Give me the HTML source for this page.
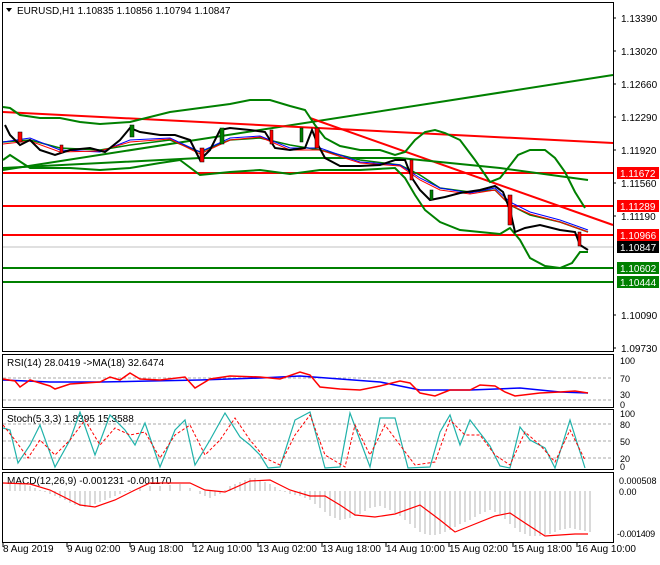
<!DOCTYPE html>
<html><head><meta charset="utf-8"><style>
body{margin:0;background:#fff;width:660px;height:560px;overflow:hidden;font-family:"Liberation Sans",sans-serif;}
svg text{font-family:"Liberation Sans",sans-serif;font-size:10px;fill:#000;}
</style></head><body>
<svg width="660" height="560" viewBox="0 0 660 560" xmlns="http://www.w3.org/2000/svg">
<rect width="660" height="560" fill="#fff"/>
<rect x="2.5" y="2.5" width="611" height="349" fill="none" stroke="#000"/>
<polygon points="6,8 12,8 9,12" fill="#000"/>
<text x="17" y="14">EURUSD,H1  1.10835 1.10856 1.10794 1.10847</text>
<g>
<text x="621" y="22">1.13390</text><text x="621" y="55">1.13020</text><text x="621" y="88">1.12660</text>
<text x="621" y="121">1.12290</text><text x="621" y="154">1.11920</text><text x="621" y="187">1.11560</text>
<text x="621" y="220">1.11190</text><text x="621" y="319">1.10090</text><text x="621" y="352">1.09730</text>
</g>
<g stroke="#000"><line x1="613" y1="18" x2="616" y2="18"/><line x1="613" y1="51" x2="616" y2="51"/><line x1="613" y1="84" x2="616" y2="84"/><line x1="613" y1="117" x2="616" y2="117"/><line x1="613" y1="150" x2="616" y2="150"/><line x1="613" y1="183" x2="616" y2="183"/><line x1="613" y1="216" x2="616" y2="216"/><line x1="613" y1="315" x2="616" y2="315"/><line x1="613" y1="348" x2="616" y2="348"/></g>
<line x1="3" y1="247" x2="613" y2="247" stroke="#c0c0c0"/>
<line x1="3" y1="173" x2="613" y2="173" stroke="#f00" stroke-width="2"/>
<line x1="3" y1="206" x2="613" y2="206" stroke="#f00" stroke-width="2"/>
<line x1="3" y1="235" x2="613" y2="235" stroke="#f00" stroke-width="2"/>
<line x1="3" y1="268" x2="613" y2="268" stroke="#008000" stroke-width="2"/>
<line x1="3" y1="282" x2="613" y2="282" stroke="#008000" stroke-width="2"/>
<line x1="3" y1="170" x2="613" y2="75" stroke="#008000" stroke-width="2"/>
<line x1="3" y1="112" x2="613" y2="143" stroke="#f00" stroke-width="2"/>
<line x1="310" y1="118" x2="613" y2="225" stroke="#f00" stroke-width="2"/>
<polyline points="3,168 200,158 400,158 500,168 588,180" fill="none" stroke="#008000" stroke-width="2"/>
<polyline points="3,107 10,108 20,115 40,118 60,118 80,122 100,124 130,122 170,112 200,108 230,104 250,100 270,100 290,106 305,110 315,125 325,138 340,146 360,150 380,150 395,155 405,152 415,140 425,132 435,130 445,133 460,140 475,160 490,182 500,178 508,168 518,155 530,150 545,150 555,158 565,172 575,192 585,208" fill="none" stroke="#008000" stroke-width="2"/>
<polyline points="3,160 10,155 30,168 50,168 70,168 100,170 130,168 160,163 180,160 200,175 230,172 260,170 290,174 320,170 360,170 395,168 405,178 415,195 425,210 440,222 460,230 480,232 500,234 510,228 520,240 530,258 545,266 560,268 572,263 580,252 588,252" fill="none" stroke="#008000" stroke-width="2"/>
<polyline points="3,142 30,140 60,148 100,150 130,145 170,140 200,152 230,140 260,138 290,145 320,150 360,160 400,165 420,175 440,188 470,192 495,190 510,205 530,215 560,222 588,232" fill="none" stroke="#008000" stroke-width="1.5"/>
<polyline points="3,142 30,138 60,150 100,152 130,140 170,138 200,152 230,138 260,136 290,148 320,148 360,162 400,165 420,178 440,188 470,193 495,188 510,202 530,212 560,220 588,230" fill="none" stroke="#00f" stroke-width="1"/>
<polyline points="3,144 30,141 60,152 100,151 130,142 170,139 200,154 230,140 260,137 290,150 320,150 360,163 400,166 420,180 440,190 470,194 495,190 510,205 530,214 560,222 588,232" fill="none" stroke="#f00" stroke-width="1"/>
<polyline points="5,125 10,135 20,145 30,140 40,150 55,155 70,150 90,148 105,152 120,140 130,128 140,132 160,135 175,135 190,140 200,160 210,150 220,130 230,128 250,130 265,132 275,148 290,150 305,148 312,130 318,145 325,158 340,166 360,166 380,165 395,160 405,160 412,178 420,190 430,200 445,197 460,193 480,190 495,186 503,192 510,210 515,232 525,228 540,225 560,230 575,232 580,245 588,250" fill="none" stroke="#000" stroke-width="2"/>
<g fill="#f00" stroke="#000" stroke-width="0.5">
<rect x="18" y="132" width="4" height="10"/><rect x="60" y="145" width="3" height="8"/><rect x="200" y="148" width="4" height="14"/><rect x="270" y="130" width="3" height="14"/><rect x="315" y="128" width="4" height="20"/><rect x="410" y="160" width="3" height="20"/><rect x="508" y="195" width="4" height="30"/><rect x="578" y="232" width="3" height="14"/>
</g>
<g fill="#008000" stroke="#000" stroke-width="0.5">
<rect x="130" y="125" width="4" height="12"/><rect x="220" y="128" width="4" height="16"/><rect x="300" y="128" width="3" height="14"/><rect x="430" y="190" width="3" height="10"/>
</g>
<rect x="617" y="167" width="42" height="12" fill="#f00"/><text x="620" y="177" style="fill:#fff">1.11672</text>
<rect x="617" y="200" width="42" height="12" fill="#f00"/><text x="620" y="210" style="fill:#fff">1.11289</text>
<rect x="617" y="229" width="42" height="12" fill="#f00"/><text x="620" y="239" style="fill:#fff">1.10966</text>
<rect x="617" y="241" width="42" height="12" fill="#000"/><text x="620" y="251" style="fill:#fff">1.10847</text>
<rect x="617" y="262" width="42" height="12" fill="#008000"/><text x="620" y="272" style="fill:#fff">1.10602</text>
<rect x="617" y="276" width="42" height="12" fill="#008000"/><text x="620" y="286" style="fill:#fff">1.10444</text>

<rect x="2.5" y="354.5" width="611" height="53" fill="none" stroke="#000"/>
<line x1="3" y1="378" x2="613" y2="378" stroke="#aaa" stroke-dasharray="3,2"/>
<line x1="3" y1="400" x2="613" y2="400" stroke="#aaa" stroke-dasharray="3,2"/>
<text x="7" y="366">RSI(14) 28.0419  -&gt;MA(18) 32.6474</text>
<text x="620" y="364" style="font-size:9px">100</text><text x="620" y="382" style="font-size:9px">70</text><text x="620" y="398" style="font-size:9px">30</text><text x="620" y="408" style="font-size:9px">0</text>
<polyline points="3,380 50,382 100,382 150,381 200,380 260,378 300,376 380,382 420,390 470,390 520,388 560,392 588,393" fill="none" stroke="#00f" stroke-width="1.5"/>
<polyline points="3,379 15,381 20,387 30,380 40,383 50,386 55,389 70,384 100,382 110,377 120,380 130,373 140,379 160,380 185,377 195,388 210,379 230,376 260,377 280,379 300,372 310,375 320,387 340,389 360,390 380,386 400,381 410,383 420,393 435,396 450,390 470,390 480,385 495,386 505,392 515,396 540,393 560,392 575,391 588,393" fill="none" stroke="#f00" stroke-width="1.5"/>

<rect x="2.5" y="409.5" width="611" height="60" fill="none" stroke="#000"/>
<line x1="3" y1="424" x2="613" y2="424" stroke="#aaa" stroke-dasharray="3,2"/>
<line x1="3" y1="441" x2="613" y2="441" stroke="#aaa" stroke-dasharray="3,2"/>
<line x1="3" y1="458" x2="613" y2="458" stroke="#aaa" stroke-dasharray="3,2"/>
<text x="7" y="422">Stoch(5,3,3) 1.8395 15.3588</text>
<text x="620" y="417" style="font-size:9px">100</text><text x="620" y="428" style="font-size:9px">80</text><text x="620" y="445" style="font-size:9px">50</text><text x="620" y="462" style="font-size:9px">20</text><text x="620" y="470" style="font-size:9px">0</text>
<polyline points="3,428 10,430 18,463 30,445 40,425 55,467 70,440 80,412 95,455 110,415 125,430 135,445 145,423 160,467 175,430 185,420 195,465 210,440 225,413 240,437 250,445 260,455 268,468 280,467 295,420 310,412 325,468 340,467 350,413 360,440 370,467 380,418 395,418 408,468 430,467 440,432 450,415 460,445 470,420 490,446 500,466 510,468 520,427 530,440 545,448 555,468 570,420 585,468" fill="none" stroke="#20b2aa" stroke-width="1.2"/>
<polyline points="3,425 15,440 28,458 40,440 55,455 70,440 85,420 100,445 115,428 130,435 145,432 160,458 175,435 190,425 205,455 220,440 235,418 250,440 265,458 280,465 295,435 310,415 325,455 345,467 355,425 370,455 385,425 400,445 415,465 435,462 450,420 465,435 480,435 495,455 510,465 525,432 540,445 555,462 570,430 585,460" fill="none" stroke="#f00" stroke-width="1" stroke-dasharray="3,2"/>

<rect x="2.5" y="472.5" width="611" height="70" fill="none" stroke="#000"/>
<text x="7" y="484">MACD(12,26,9) -0.001231 -0.001170</text>
<text x="619" y="484" style="font-size:9px">0.000508</text><text x="619" y="495" style="font-size:9px">0.00</text><text x="617" y="537" style="font-size:9px;letter-spacing:-0.3px">-0.001409</text>
<g stroke="#b4b4b4" stroke-width="1">
<path d="M10 491V482M15 491V483M20 491V484M25 491V485M30 491V486M35 491V488M40 491V490M45 491V492M50 491V494M55 491V496M60 491V498M65 491V500M70 491V503M75 491V505M80 491V506M85 491V507M90 491V506M95 491V504M100 491V502M105 491V500M110 491V498M115 491V496M120 491V494M125 491V492M130 491V490M140 491V488M150 491V486M160 491V486M170 491V485M180 491V484M190 491V488M195 491V491M200 491V494M205 491V496M210 491V498M215 491V496M220 491V494M225 491V490M230 491V486M235 491V484M240 491V482M245 491V480M250 491V478M255 491V478M260 491V480M265 491V482M270 491V484M275 491V487M280 491V490M285 491V492M290 491V494M295 491V495M300 491V496M305 491V498M310 491V500M315 491V504M320 491V508M325 491V512M330 491V516M335 491V518M340 491V520M345 491V519M350 491V518M355 491V516M360 491V514M365 491V511M370 491V508M375 491V507M380 491V506M385 491V508M390 491V510M395 491V513M400 491V516M405 491V520M410 491V524M415 491V528M420 491V532M425 491V534M430 491V535M435 491V535M440 491V534M445 491V532M450 491V530M455 491V527M460 491V524M465 491V522M470 491V520M475 491V517M480 491V514M485 491V512M490 491V510M495 491V512M500 491V514M505 491V519M510 491V524M515 491V528M520 491V532M525 491V534M530 491V536M535 491V536M540 491V536M545 491V535M550 491V534M555 491V532M560 491V530M565 491V529M570 491V528M575 491V529M580 491V530M585 491V531M590 491V532"/>
</g>
<polyline points="3,483 30,484 50,490 80,505 95,507 115,500 135,490 150,483 190,483 205,490 225,492 250,481 270,480 290,490 310,496 325,496 340,505 355,515 375,517 395,514 420,505 440,520 455,532 470,526 495,516 510,513 525,523 545,536 560,535 575,534 588,534" fill="none" stroke="#f00" stroke-width="1.2"/>

<g stroke="#000"><path d="M3 543V547M67 543V547M130 543V547M193 543V547M258 543V547M322 543V547M386 543V547M449 543V547M513 543V547M577 543V547"/></g>
<text x="3" y="552">8 Aug 2019</text><text x="67" y="552">9 Aug 02:00</text><text x="130" y="552">9 Aug 18:00</text>
<text x="193" y="552">12 Aug 10:00</text><text x="258" y="552">13 Aug 02:00</text><text x="322" y="552">13 Aug 18:00</text>
<text x="386" y="552">14 Aug 10:00</text><text x="449" y="552">15 Aug 02:00</text><text x="513" y="552">15 Aug 18:00</text>
<text x="577" y="552">16 Aug 10:00</text>
</svg>
</body></html>
